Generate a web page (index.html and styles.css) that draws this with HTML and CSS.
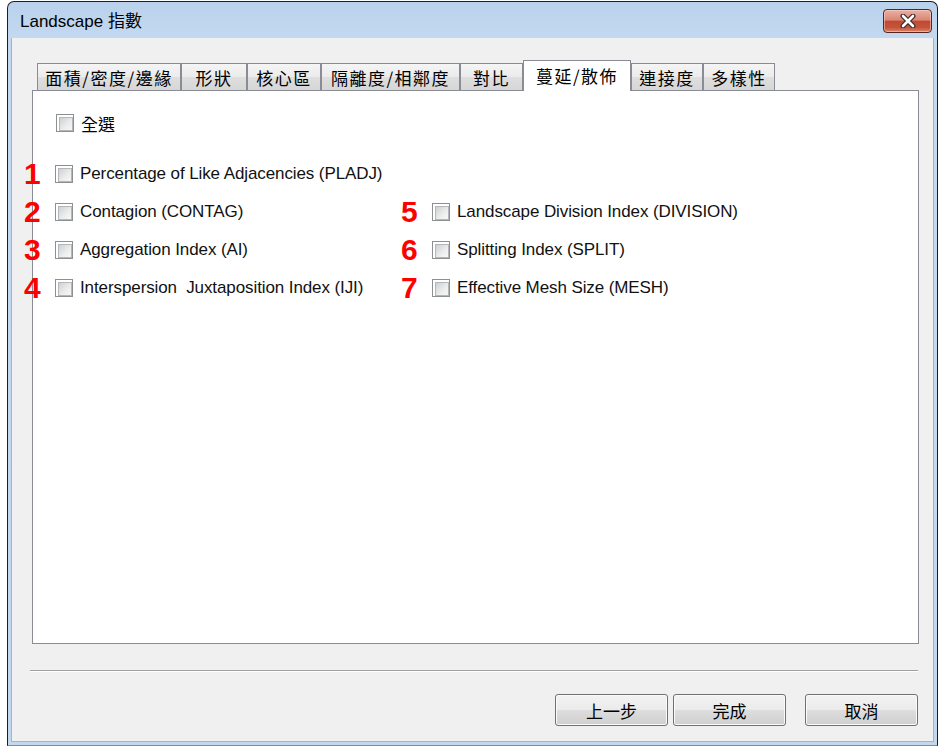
FILE: index.html
```html
<!DOCTYPE html>
<html lang="zh-Hant">

<head>
    <meta charset="UTF-8">
    <title>Landscape 指數</title>
    <link rel="stylesheet" href="styles.css">
</head>

<body>
    <div class="window">
        <div class="titlebar">
            <span class="title">Landscape 指數</span>
            <button class="close-btn" type="button">
                <svg width="20" height="14" viewBox="0 0 20 14">
                    <path d="M5 2 L15 12 M15 2 L5 12" stroke="#3b2b2b" stroke-width="5" stroke-linecap="round" />
                    <path d="M5 2 L15 12 M15 2 L5 12" stroke="#ffffff" stroke-width="2.6" stroke-linecap="round" />
                </svg>
            </button>
        </div>

        <div class="client">
            <div class="tabs">
                <div class="tab">面積/密度/邊緣</div>
                <div class="tab">形狀</div>
                <div class="tab">核心區</div>
                <div class="tab">隔離度/相鄰度</div>
                <div class="tab">對比</div>
                <div class="tab active">蔓延/散佈</div>
                <div class="tab">連接度</div>
                <div class="tab">多樣性</div>
            </div>

            <div class="panel">
                <label class="select-all"><span class="checkbox"></span>全選</label>

                <div class="metric-grid">
                    <label class="metric"><span class="num">1</span><span class="checkbox"></span>Percentage of Like Adjacencies (PLADJ)</label>
                    <div></div>
                    <label class="metric"><span class="num">2</span><span class="checkbox"></span>Contagion (CONTAG)</label>
                    <label class="metric"><span class="num">5</span><span class="checkbox"></span>Landscape Division Index (DIVISION)</label>
                    <label class="metric"><span class="num">3</span><span class="checkbox"></span>Aggregation Index (AI)</label>
                    <label class="metric"><span class="num">6</span><span class="checkbox"></span>Splitting Index (SPLIT)</label>
                    <label class="metric"><span class="num">4</span><span class="checkbox"></span>Interspersion&nbsp; Juxtaposition Index (IJI)</label>
                    <label class="metric"><span class="num">7</span><span class="checkbox"></span>Effective Mesh Size (MESH)</label>
                </div>
            </div>

            <div class="separator"></div>

            <div class="buttons">
                <button class="btn" type="button">上一步</button>
                <button class="btn" type="button">完成</button>
                <button class="btn cancel" type="button">取消</button>
            </div>
        </div>
    </div>
</body>

</html>
```

FILE: styles.css
```css
* {
    box-sizing: border-box;
}

body {
    margin: 0;
    background-color: #ffffff;
    font-family: "Liberation Sans", "Noto Sans CJK TC", sans-serif;
    color: #111111;
    overflow: hidden;
}

.window {
    margin: 1px 0 0 7px;
    width: 931px;
    height: 745px;
    border: 1px solid #1e1e1e;
    border-bottom-color: #3aa6cc;
    border-radius: 7px 7px 0 0;
    background: linear-gradient(#b9d1eb, #c3d9f0 36px, #c3d8ef);
    display: flex;
    flex-direction: column;
}

.titlebar {
    height: 36px;
    flex-shrink: 0;
    display: flex;
    align-items: flex-start;
    padding: 0 5px 0 12px;
}

.title {
    font-size: 17px;
    line-height: 40px;
    color: #000000;
}

.close-btn {
    margin: 7px 0 0 auto;
    width: 49px;
    height: 24px;
    padding: 0;
    border: 1px solid #5a2424;
    border-radius: 4px;
    background: linear-gradient(#e9b0a3 0%, #d98876 45%, #c24a33 52%, #c4543c 80%, #d9886a 100%);
    box-shadow: inset 0 0 0 1px rgba(255, 220, 210, 0.5);
    display: flex;
    align-items: center;
    justify-content: center;
}

.client {
    flex: 1;
    margin: 0 3px 3px 3px;
    border: 1px solid #9fb5ce;
    border-top: none;
    background-color: #f0f0f0;
    padding: 22px 14px 0 20px;
    display: flex;
    flex-direction: column;
}

.tabs {
    display: grid;
    grid-template-columns: 144px 66px 74px 139px 63px 108px 72px 72px;
    align-items: end;
    height: 30px;
    margin-left: 5px;
    position: relative;
    z-index: 1;
}

.tab {
    height: 27px;
    border: 1px solid #898c95;
    border-bottom: none;
    background: linear-gradient(#f5f5f5, #ebebeb 50%, #dedede 52%, #d6d6d6);
    font-family: "Noto Sans CJK TC", sans-serif;
    font-size: 17px;
    letter-spacing: 1.5px;
    color: #000000;
    display: flex;
    align-items: center;
    justify-content: center;
}

.tab.active {
    height: 31px;
    margin-bottom: -1px;
    background: #ffffff;
    padding-bottom: 2px;
}

.panel {
    height: 554px;
    flex-shrink: 0;
    border: 1px solid #898c95;
    background-color: #ffffff;
    padding: 13px 0 0 23px;
}

.checkbox {
    width: 18px;
    height: 18px;
    flex-shrink: 0;
    border: 1px solid #8e8f8f;
    background-color: #ffffff;
    padding: 2px;
}

.checkbox::after {
    content: "";
    display: block;
    width: 100%;
    height: 100%;
    border: 1px solid #b3b6ba;
    background: linear-gradient(135deg, #cdd0d4, #eceded 60%, #f7f7f7);
}

.select-all {
    display: flex;
    align-items: center;
    gap: 7px;
    height: 38px;
    margin-bottom: 13px;
    font-family: "Noto Sans CJK TC", sans-serif;
    font-size: 17px;
    color: #000000;
}

.metric-grid {
    display: grid;
    grid-template-columns: 377px 1fr;
    grid-auto-rows: 38px;
    margin-left: -32px;
}

.metric {
    display: flex;
    align-items: center;
    font-size: 17px;
    letter-spacing: -0.1px;
}

.metric .checkbox {
    margin-right: 7px;
}

.num {
    width: 16px;
    margin-right: 15px;
    text-align: center;
    font-family: "Liberation Sans", sans-serif;
    font-weight: bold;
    font-size: 30px;
    line-height: 1;
    color: #ff0000;
}

.separator {
    margin: 26px 0 0 -2px;
    width: 888px;
    border-top: 1px solid #a0a0a0;
    border-bottom: 1px solid #ffffff;
}

.buttons {
    margin: 22px 1px 0 0;
    display: flex;
    justify-content: flex-end;
    gap: 5px;
}

.btn {
    width: 113px;
    height: 32px;
    border: 1px solid #707070;
    border-radius: 3px;
    background: linear-gradient(#f2f2f2, #ebebeb 48%, #dddddd 52%, #cfcfcf);
    box-shadow: inset 0 0 0 1px #fbfbfb;
    font-family: "Noto Sans CJK TC", sans-serif;
    font-size: 17px;
    color: #000000;
    padding: 0;
}

.btn.cancel {
    margin-left: 14px;
}
```
